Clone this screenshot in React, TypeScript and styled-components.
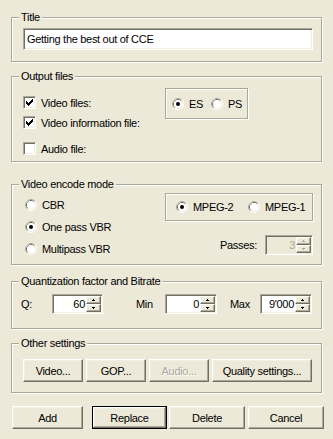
import React from 'react';
import styled, { createGlobalStyle, css } from 'styled-components';

const GlobalStyle = createGlobalStyle`
  html, body { margin: 0; padding: 0; background: #ece9d8; }
  body { font-family: "Liberation Sans", Arial, sans-serif; font-size: 11px; letter-spacing: -0.3px; color: #000; }
  * { box-sizing: border-box; }
`;

const sunken = css`
  border: 1px solid;
  border-color: #aca899 #fff #fff #aca899;
  box-shadow: inset 1px 1px 0 #716f64, inset -1px -1px 0 #f1efe2;
`;

const raised = css`
  border: 1px solid;
  border-color: #fff #716f64 #716f64 #fff;
  box-shadow: inset -1px -1px 0 #aca899, inset 1px 1px 0 #f1efe2;
`;

const etched = css`
  border: 1px solid #aca899;
  box-shadow: inset 1px 1px 0 #fff, 1px 1px 0 #fff;
`;

const Dialog = styled.div`
  width: 333px;
  height: 439px;
  padding: 17px 0 0 11px;
  display: flex;
  flex-direction: column;
  background: #ece9d8;
`;

const Group = styled.div<{ $h: number; $mt?: number }>`
  position: relative;
  flex-shrink: 0;
  width: 311px;
  height: ${(p) => p.$h}px;
  margin-top: ${(p) => p.$mt ?? 0}px;
  ${etched}
`;

const Legend = styled.span`
  position: absolute;
  top: -7px;
  left: 7px;
  padding: 0 2px;
  line-height: 13px;
  background: #ece9d8;
  white-space: nowrap;
`;

const GroupBody = styled.div<{ $pt: number; $pl?: number }>`
  display: flex;
  padding: ${(p) => p.$pt}px 0 0 ${(p) => p.$pl ?? 11}px;
`;

const TextField = styled.div`
  width: 290px;
  height: 22px;
  ${sunken};
  background: #fff;
  padding: 0 3px;
  line-height: 20px;
  white-space: nowrap;
  overflow: hidden;
`;

const Column = styled.div<{ $w: number; $pt?: number }>`
  display: flex;
  flex-direction: column;
  width: ${(p) => p.$w}px;
  padding-top: ${(p) => p.$pt ?? 0}px;
  flex-shrink: 0;
`;

const OptionRow = styled.div<{ $mt?: number; $h?: number; $indent?: number }>`
  display: flex;
  align-items: center;
  gap: 5px;
  height: ${(p) => p.$h ?? 13}px;
  margin-top: ${(p) => p.$mt ?? 0}px;
  padding-left: ${(p) => p.$indent ?? 0}px;
  white-space: nowrap;
`;

const CheckFrame = styled.span`
  display: inline-flex;
  width: 13px;
  height: 13px;
  flex-shrink: 0;
  ${sunken};
  background: #fff;
`;

const SubBox = styled.div<{ $w: number; $h: number; $pl: number }>`
  display: flex;
  align-items: center;
  width: ${(p) => p.$w}px;
  height: ${(p) => p.$h}px;
  padding-left: ${(p) => p.$pl}px;
  flex-shrink: 0;
  ${etched}
`;

const RadioItem = styled.div<{ $w?: number }>`
  display: flex;
  align-items: center;
  gap: 5px;
  width: ${(p) => (p.$w ? `${p.$w}px` : 'auto')};
  white-space: nowrap;
`;

const PassesRow = styled.div`
  display: flex;
  align-items: center;
  justify-content: flex-end;
  gap: 8px;
  margin-top: 14px;
`;

const Spin = styled.div<{ $w: number; $disabled?: boolean }>`
  display: flex;
  width: ${(p) => p.$w}px;
  height: 20px;
  padding: 1px;
  flex-shrink: 0;
  ${sunken};
  background: ${(p) => (p.$disabled ? '#ece9d8' : '#fff')};
`;

const SpinValue = styled.div<{ $disabled?: boolean }>`
  flex: 1;
  text-align: right;
  line-height: 16px;
  padding-right: 1px;
  color: ${(p) => (p.$disabled ? '#aca899' : '#000')};
`;

const UpDown = styled.div`
  display: flex;
  flex-direction: column;
  width: 15px;
`;

const SpinButton = styled.div`
  flex: 1;
  display: flex;
  align-items: center;
  justify-content: center;
  background: #ece9d8;
  ${raised};
`;

const QuantRow = styled.div`
  display: flex;
  align-items: center;
  height: 20px;
`;

const FieldLabel = styled.span<{ $w: number; $pl?: number }>`
  width: ${(p) => p.$w}px;
  padding-left: ${(p) => p.$pl ?? 0}px;
  flex-shrink: 0;
  white-space: nowrap;
`;

const ButtonRow = styled.div<{ $gap?: number; $mt?: number; $pl?: number }>`
  display: flex;
  gap: ${(p) => p.$gap ?? 0}px;
  margin-top: ${(p) => p.$mt ?? 0}px;
  padding-left: ${(p) => p.$pl ?? 0}px;
`;

const Button = styled.button<{ $w: number; $ml?: number; $default?: boolean }>`
  width: ${(p) => p.$w}px;
  height: 23px;
  margin: 0 0 0 ${(p) => p.$ml ?? 0}px;
  padding: 0;
  flex-shrink: 0;
  font: inherit;
  letter-spacing: inherit;
  color: #000;
  background: #ece9d8;
  ${(p) =>
    p.$default
      ? css`
          border: 1px solid #000;
          box-shadow: inset -1px -1px 0 #716f64, inset 1px 1px 0 #fff, inset -2px -2px 0 #aca899,
            inset 2px 2px 0 #f1efe2;
        `
      : raised};
  &:disabled {
    color: #aca899;
    text-shadow: 1px 1px 0 #fff;
  }
`;

const Check = ({ checked }: { checked: boolean }) => (
  <CheckFrame>
    <svg width="11" height="11" viewBox="0 0 11 11" shapeRendering="crispEdges">
      {checked &&
        [
          [2, 4],
          [3, 5],
          [4, 6],
          [5, 5],
          [6, 4],
          [7, 3],
          [8, 2],
        ].map(([x, y]) => <rect key={x} x={x} y={y} width="1" height="3" fill="#000" />)}
    </svg>
  </CheckFrame>
);

const Radio = ({ checked }: { checked?: boolean }) => (
  <svg width="12" height="12" viewBox="0 0 12 12" style={{ flexShrink: 0 }}>
    <circle cx="6" cy="6" r="5.5" fill="none" stroke="#fff" />
    <path d="M2.11 9.89A5.5 5.5 0 0 1 9.89 2.11" fill="none" stroke="#aca899" />
    <circle cx="6" cy="6" r="4.5" fill="none" stroke="#f1efe2" />
    <path d="M2.82 9.18A4.5 4.5 0 0 1 9.18 2.82" fill="none" stroke="#716f64" />
    <circle cx="6" cy="6" r="4" fill="#fff" />
    {checked && <circle cx="6" cy="6" r="2" fill="#000" />}
  </svg>
);

const Arrow = ({ up, disabled }: { up?: boolean; disabled?: boolean }) => {
  const c = disabled ? '#aca899' : '#000';
  return (
    <svg width="3" height="2" viewBox="0 0 3 2" shapeRendering="crispEdges">
      <rect x="1" y={up ? 0 : 1} width="1" height="1" fill={c} />
      <rect x="0" y={up ? 1 : 0} width="3" height="1" fill={c} />
    </svg>
  );
};

const SpinBox = ({ value, w, disabled }: { value: string; w: number; disabled?: boolean }) => (
  <Spin $w={w} $disabled={disabled}>
    <SpinValue $disabled={disabled}>{value}</SpinValue>
    <UpDown>
      <SpinButton>
        <Arrow up disabled={disabled} />
      </SpinButton>
      <SpinButton>
        <Arrow disabled={disabled} />
      </SpinButton>
    </UpDown>
  </Spin>
);

export default function App() {
  return (
    <>
      <GlobalStyle />
      <Dialog>
        <Group $h={45}>
          <Legend>Title</Legend>
          <GroupBody $pt={10}>
            <TextField>Getting the best out of CCE</TextField>
          </GroupBody>
        </Group>

        <Group $h={86} $mt={14}>
          <Legend>Output files</Legend>
          <GroupBody $pt={11}>
            <Column $w={142} $pt={8}>
              <OptionRow>
                <Check checked />
                <span>Video files:</span>
              </OptionRow>
              <OptionRow $mt={7}>
                <Check checked />
                <span>Video information file:</span>
              </OptionRow>
              <OptionRow $mt={13}>
                <Check checked={false} />
                <span>Audio file:</span>
              </OptionRow>
            </Column>
            <SubBox $w={83} $h={31} $pl={6}>
              <RadioItem $w={39}>
                <Radio checked />
                <span>ES</span>
              </RadioItem>
              <RadioItem>
                <Radio />
                <span>PS</span>
              </RadioItem>
            </SubBox>
          </GroupBody>
        </Group>

        <Group $h={81} $mt={22}>
          <Legend>Video encode mode</Legend>
          <GroupBody $pt={0}>
            <Column $w={142} $pt={14}>
              <OptionRow $h={12} $indent={2}>
                <Radio />
                <span>CBR</span>
              </OptionRow>
              <OptionRow $h={12} $indent={2} $mt={10}>
                <Radio checked />
                <span>One pass VBR</span>
              </OptionRow>
              <OptionRow $h={12} $indent={2} $mt={10}>
                <Radio />
                <span>Multipass VBR</span>
              </OptionRow>
            </Column>
            <Column $w={148} $pt={8}>
              <SubBox $w={148} $h={28} $pl={10}>
                <RadioItem $w={72}>
                  <Radio checked />
                  <span>MPEG-2</span>
                </RadioItem>
                <RadioItem>
                  <Radio />
                  <span>MPEG-1</span>
                </RadioItem>
              </SubBox>
              <PassesRow>
                <span>Passes:</span>
                <SpinBox value="3" w={48} disabled />
              </PassesRow>
            </Column>
          </GroupBody>
        </Group>

        <Group $h={48} $mt={16}>
          <Legend>Quantization factor and Bitrate</Legend>
          <GroupBody $pt={12} $pl={9}>
            <QuantRow>
              <FieldLabel $w={31}>Q:</FieldLabel>
              <SpinBox value="60" w={51} />
              <FieldLabel $w={62} $pl={33}>
                Min
              </FieldLabel>
              <SpinBox value="0" w={52} />
              <FieldLabel $w={43} $pl={13}>
                Max
              </FieldLabel>
              <SpinBox value="9'000" w={52} />
            </QuantRow>
          </GroupBody>
        </Group>

        <Group $h={50} $mt={14}>
          <Legend>Other settings</Legend>
          <GroupBody $pt={15}>
            <ButtonRow $gap={3}>
              <Button $w={60}>Video...</Button>
              <Button $w={60}>GOP...</Button>
              <Button $w={60} disabled>
                Audio...
              </Button>
              <Button $w={100}>Quality settings...</Button>
            </ButtonRow>
          </GroupBody>
        </Group>

        <ButtonRow $mt={13} $pl={1}>
          <Button $w={71}>Add</Button>
          <Button $w={75} $ml={9} $default>
            Replace
          </Button>
          <Button $w={76} $ml={2}>
            Delete
          </Button>
          <Button $w={76} $ml={3}>
            Cancel
          </Button>
        </ButtonRow>
      </Dialog>
    </>
  );
}
